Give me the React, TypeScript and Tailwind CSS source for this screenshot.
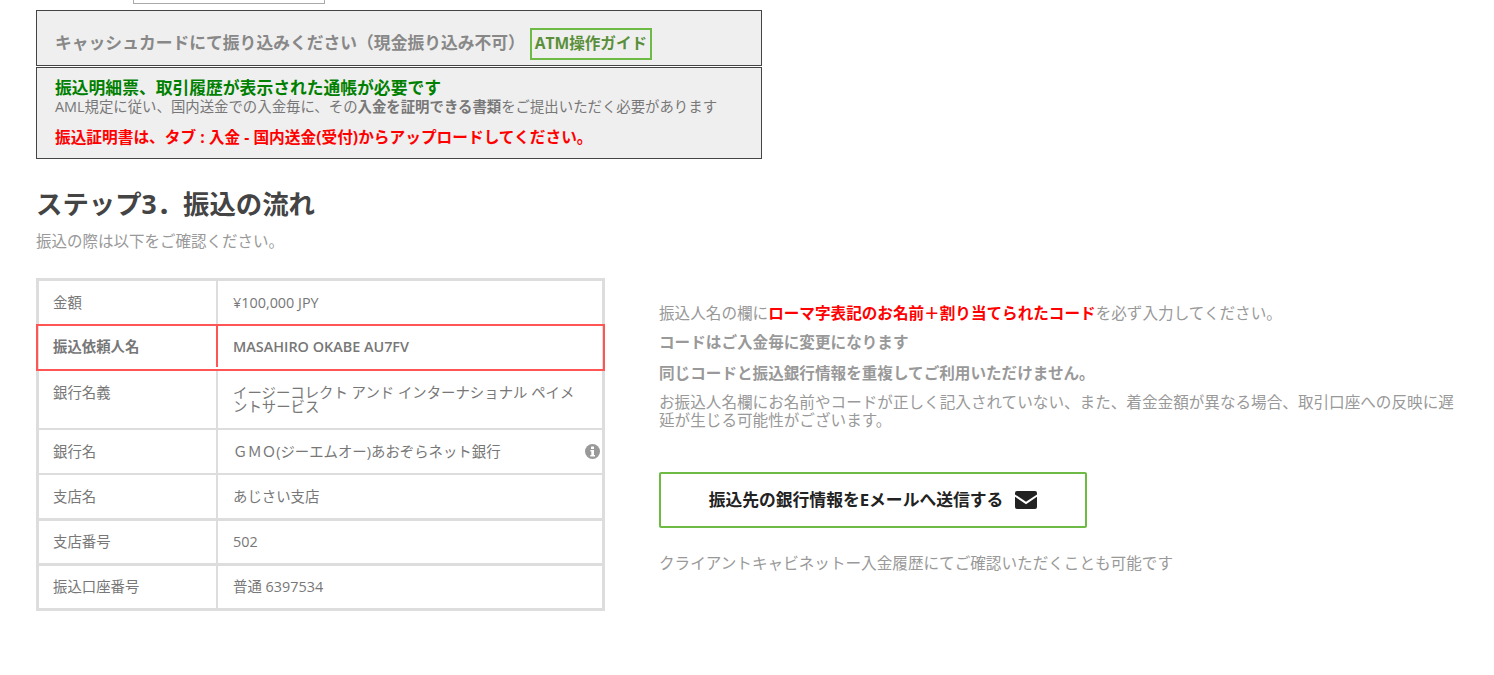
const font = 'font-["Open_Sans","Noto_Sans_CJK_JP",sans-serif]';

const rows = [
  { label: '金額', value: '¥100,000 JPY', height: 'h-[43px]', border: '' },
  { label: '振込依頼人名', value: 'MASAHIRO OKABE AU7FV', height: 'h-[47px]', border: '', highlight: true },
  { label: '銀行名義', value: 'イージーコレクト アンド インターナショナル ペイメントサービス', height: 'h-[57px]', border: '' },
  { label: '銀行名', value: 'ＧＭＯ(ジーエムオー)あおぞらネット銀行', height: 'h-[45px]', border: 'border-t-2', info: true },
  { label: '支店名', value: 'あじさい支店', height: 'h-[45px]', border: 'border-t-2' },
  { label: '支店番号', value: '502', height: 'h-[45px]', border: 'border-t-[3px]' },
  { label: '振込口座番号', value: '普通 6397534', height: 'h-[45px]', border: 'border-t-[3px]' },
];

function InfoIcon() {
  return (
    <svg className="absolute right-[2px] top-[14px] w-[15px] h-[15px]" viewBox="0 0 15 15">
      <circle cx="7.5" cy="7.5" r="7.5" fill="#999" />
      <rect x="6" y="2.4" width="3" height="2.6" rx="0.5" fill="#fff" />
      <path d="M5.4 6.1h3.6v4.8h1v1.6H5.3v-1.6h1V7.6h-.9z" fill="#fff" />
    </svg>
  );
}

function BankTable() {
  return (
    <div className="w-[569px] border-[3px] border-[#ddd] text-[14.4px] leading-[14px] text-[#777]">
      {rows.map((row) => {
        const multiline = row.value.length > 30;
        return (
          <div
            key={row.label}
            className={`relative flex ${row.height} ${row.border} border-[#ddd] ${
              row.highlight ? '-mx-[3px] border-2 border-[#f55] font-semibold pb-[2px]' : ''
            }`}
          >
            <div className={`shrink-0 ${row.highlight ? 'w-[178px] pl-[15px]' : 'w-[177px] pl-[14px]'} ${multiline ? 'pt-[15px]' : 'flex items-center'}`}>
              {row.label}
            </div>
            <div
              className={`flex-1 pl-[15px] pr-[20px] border-l-2 ${row.highlight ? 'border-[#f55]' : 'border-[#ddd]'} ${
                multiline ? 'pt-[15px]' : 'flex items-center'
              }`}
            >
              {row.value}
            </div>
            {row.info && <InfoIcon />}
          </div>
        );
      })}
    </div>
  );
}

function Notes() {
  return (
    <div className="w-[800px] pt-[25px] text-[#999] text-[15.6px]">
      <p className="leading-[20px]">
        振込人名の欄に<strong className="text-[#f00] font-bold">ローマ字表記のお名前＋割り当てられたコード</strong>を必ず入力してください。
      </p>
      <p className="mt-[9px] leading-[20px] font-bold">コードはご入金毎に変更になります</p>
      <p className="mt-[11px] leading-[20px] font-bold">同じコードと振込銀行情報を重複してご利用いただけません。</p>
      <p className="mt-[10px] leading-[18px]">
        お振込人名欄にお名前やコードが正しく記入されていない、また、着金金額が異なる場合、取引口座への反映に遅延が生じる可能性がございます。
      </p>
      <button className="mt-[43px] w-[428px] h-[56px] flex items-center justify-center gap-[12px] border-2 border-[#6dbb45] rounded-[2px] text-[16.8px] font-bold text-[#222]">
        振込先の銀行情報をEメールへ送信する
        <svg className="w-[22px] h-[18px]" viewBox="0 0 22 18">
          <path d="M2 0h18a2 2 0 0 1 2 2v1.4l-11 7.4L0 3.4V2a2 2 0 0 1 2-2z" fill="#222" />
          <path d="M0 5.8l11 7.4 11-7.4V16a2 2 0 0 1-2 2H2a2 2 0 0 1-2-2z" fill="#222" />
        </svg>
      </button>
      <p className="mt-[25px] leading-[20px]">クライアントキャビネットー入金履歴にてご確認いただくことも可能です</p>
    </div>
  );
}

export default function App() {
  return (
    <div className={`${font} w-[1494px] h-[675px] overflow-hidden bg-white pl-[36px]`}>
      <div className="ml-[97px] w-[192px] h-[4px] border border-t-0 border-[#aaa]" />
      <div className="mt-[6px] w-[726px] h-[56px] border border-[#444] bg-[#efefef] pl-[18px] pt-[9px] flex items-center gap-[5px]">
        <span className="text-[16.8px] font-bold text-[#888]">キャッシュカードにて振り込みください（現金振り込み不可）</span>
        <span className="mt-[2px] h-[32px] w-[122px] flex items-center justify-center border-2 border-[#6dbb45] text-[15.6px] font-bold text-[#5a8f3a]">ATM操作ガイド</span>
      </div>
      <div className="mt-[1px] w-[726px] h-[92px] border border-[#444] bg-[#efefef] pl-[18px] pt-[11px]">
        <p className="text-[16.8px] leading-[18px] font-bold text-[#008000]">振込明細票、取引履歴が表示された通帳が必要です</p>
        <p className="mt-[2px] text-[14.4px] leading-[16px] text-[#777]">
          AML規定に従い、国内送金での入金毎に、その<strong className="font-bold">入金を証明できる書類</strong>をご提出いただく必要があります
        </p>
        <p className="mt-[13px] text-[15.7px] leading-[18px] font-bold text-[#f00]">振込証明書は、タブ : 入金 - 国内送金(受付)からアップロードしてください。</p>
      </div>
      <h2 className="mt-[28px] text-[26.4px] leading-[34px] font-bold text-[#444]">ステップ3．振込の流れ</h2>
      <p className="mt-[10px] text-[15.5px] leading-[20px] text-[#999]">振込の際は以下をご確認ください。</p>
      <div className="mt-[27px] flex gap-[54px]">
        <BankTable />
        <Notes />
      </div>
    </div>
  );
}
